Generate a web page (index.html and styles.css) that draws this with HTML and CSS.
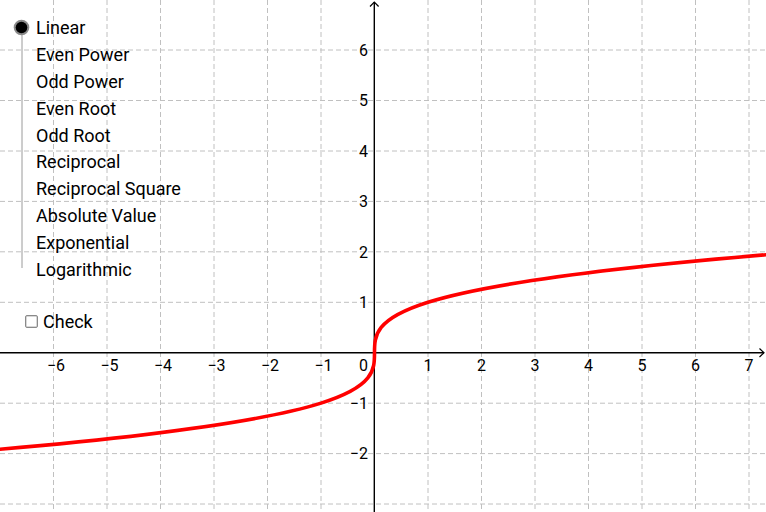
FILE: index.html
```html
<!DOCTYPE html>
<html lang="en">
<head>
<meta charset="utf-8">
<title>Function Families</title>
<link rel="stylesheet" href="styles.css">
</head>
<body>
<div class="stage">
  <svg class="graph" width="766" height="512" viewBox="0 0 766 512" xmlns="http://www.w3.org/2000/svg">
    <g class="grid">
      <line x1="53.5" y1="0" x2="53.5" y2="512"/>
      <line x1="107" y1="0" x2="107" y2="512"/>
      <line x1="160.5" y1="0" x2="160.5" y2="512"/>
      <line x1="214" y1="0" x2="214" y2="512"/>
      <line x1="267.5" y1="0" x2="267.5" y2="512"/>
      <line x1="321" y1="0" x2="321" y2="512"/>
      <line x1="428" y1="0" x2="428" y2="512"/>
      <line x1="481.5" y1="0" x2="481.5" y2="512"/>
      <line x1="535" y1="0" x2="535" y2="512"/>
      <line x1="588.5" y1="0" x2="588.5" y2="512"/>
      <line x1="642" y1="0" x2="642" y2="512"/>
      <line x1="695.5" y1="0" x2="695.5" y2="512"/>
      <line x1="749" y1="0" x2="749" y2="512"/>
      <line x1="0" y1="50" x2="766" y2="50"/>
      <line x1="0" y1="100.5" x2="766" y2="100.5"/>
      <line x1="0" y1="151" x2="766" y2="151"/>
      <line x1="0" y1="201.4" x2="766" y2="201.4"/>
      <line x1="0" y1="251.8" x2="766" y2="251.8"/>
      <line x1="0" y1="302.3" x2="766" y2="302.3"/>
      <line x1="0" y1="403.2" x2="766" y2="403.2"/>
      <line x1="0" y1="453.6" x2="766" y2="453.6"/>
      <line x1="0" y1="504" x2="766" y2="504"/>
    </g>
    <g class="axes">
      <line x1="0" y1="352.7" x2="764" y2="352.7"/>
      <line x1="374.3" y1="2" x2="374.3" y2="512"/>
      <polyline points="759.5,348.5 764,352.7 759.5,357"/>
      <polyline points="370,6.5 374.3,2 378.6,6.5"/>
    </g>
    <path class="curve" d="M -53.5 453.6 C 802.5 386.33, -53.5 319.07, 802.5 251.8"/>
    <g class="xlabels">
      <text x="56" y="370.7">−6</text>
      <text x="109.5" y="370.7">−5</text>
      <text x="163" y="370.7">−4</text>
      <text x="216.5" y="370.7">−3</text>
      <text x="270" y="370.7">−2</text>
      <text x="323.5" y="370.7">−1</text>
      <text x="428" y="370.7">1</text>
      <text x="481.5" y="370.7">2</text>
      <text x="535" y="370.7">3</text>
      <text x="588.5" y="370.7">4</text>
      <text x="642" y="370.7">5</text>
      <text x="695.5" y="370.7">6</text>
      <text x="749" y="370.7">7</text>
    </g>
    <g class="ylabels">
      <text x="368" y="370.7">0</text>
      <text x="368" y="55.8">6</text>
      <text x="368" y="106.2">5</text>
      <text x="368" y="156.7">4</text>
      <text x="368" y="207.1">3</text>
      <text x="368" y="257.6">2</text>
      <text x="368" y="308">1</text>
      <text x="368" y="408.9">−1</text>
      <text x="368" y="459.4">−2</text>
    </g>
  </svg>

  <div class="controls">
    <div class="radio-group">
      <svg class="radio-track" width="36" height="260" viewBox="0 0 36 260" xmlns="http://www.w3.org/2000/svg">
        <line x1="22" y1="13.5" x2="22" y2="254" class="track"/>
        <circle cx="21.5" cy="13.5" r="7.8" class="radio-ring"/>
        <circle cx="21.5" cy="13.5" r="5.8" class="radio-dot"/>
      </svg>
      <ul class="options">
        <li>Linear</li>
        <li>Even Power</li>
        <li>Odd Power</li>
        <li>Even Root</li>
        <li>Odd Root</li>
        <li>Reciprocal</li>
        <li>Reciprocal Square</li>
        <li>Absolute Value</li>
        <li>Exponential</li>
        <li>Logarithmic</li>
      </ul>
    </div>
    <div class="check-row">
      <span class="checkbox"></span>
      <span class="check-label">Check</span>
    </div>
  </div>
</div>
</body>
</html>
```
FILE: styles.css
```css
html, body {
  margin: 0;
  padding: 0;
  background: #ffffff;
}

.stage {
  position: relative;
  width: 766px;
  height: 512px;
  overflow: hidden;
  background: #ffffff;
  font-family: Roboto, "Liberation Sans", sans-serif;
}

.graph {
  display: block;
}

.grid line {
  stroke: #c0c0c0;
  stroke-width: 1;
  stroke-dasharray: 5 3;
}

.axes line {
  stroke: #000000;
  stroke-width: 1.4;
}

.axes polyline {
  fill: none;
  stroke: #000000;
  stroke-width: 1.2;
}

.curve {
  fill: none;
  stroke: #ff0000;
  stroke-width: 3.6;
  stroke-linecap: round;
}

.xlabels text,
.ylabels text {
  font-family: Roboto, "Liberation Sans", sans-serif;
  font-size: 16px;
  fill: #000000;
}

.xlabels text {
  text-anchor: middle;
}

.ylabels text {
  text-anchor: end;
}

.controls {
  position: absolute;
  left: 0;
  top: 14px;
  display: flex;
  flex-direction: column;
}

.radio-group {
  display: flex;
}

.radio-track {
  display: block;
  flex: none;
}

.track {
  stroke: #9a9a9a;
  stroke-width: 1;
}

.radio-ring {
  fill: #8a8a8a;
}

.radio-dot {
  fill: #000000;
}

.options {
  list-style: none;
  margin: 0;
  padding: 0;
  display: flex;
  flex-direction: column;
}

.options li {
  height: 26.9px;
  line-height: 27px;
  font-size: 18px;
  color: #000000;
  white-space: nowrap;
}

.check-row {
  margin-top: 25px;
  height: 27px;
  display: flex;
  align-items: center;
  gap: 5px;
  padding-left: 25px;
}

.checkbox {
  width: 11px;
  height: 11px;
  border: 1px solid #8a8a8a;
  border-radius: 2px;
  background: #ffffff;
  box-sizing: border-box;
  box-shadow: inset 0 0 0 0.5px #b0b0b0;
  flex: none;
  width: 13px;
  height: 13px;
}

.check-label {
  font-size: 18px;
  line-height: 27px;
  color: #000000;
}
```
